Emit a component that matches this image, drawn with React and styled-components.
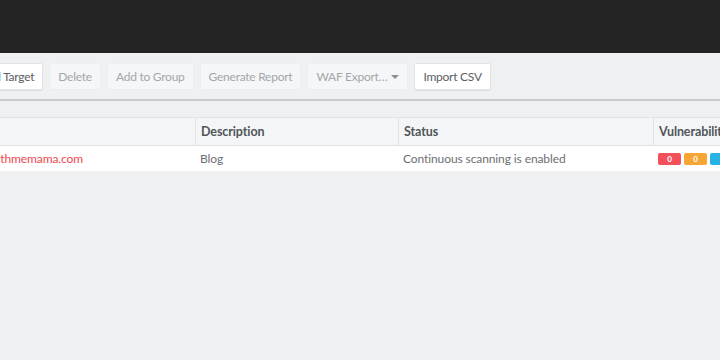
import React from "react";
import styled, { createGlobalStyle } from "styled-components";

const GlobalStyle = createGlobalStyle`
  html, body {
    margin: 0;
    padding: 0;
    background: #eef0f1;
    font-family: "Lato", "Liberation Sans", sans-serif;
    overflow: hidden;
  }
`;

const Page = styled.div`
  width: 720px;
  height: 360px;
  overflow: hidden;
  background: #eef0f1;
`;

const TopBar = styled.div`
  height: 53px;
  background: #242424;
`;

const Toolbar = styled.div`
  display: flex;
  gap: 6px;
  padding: 10px 0 9px 0;
  border-bottom: 2px solid #c9cbcc;
  margin-left: -29px;
  width: 800px;
`;

const Button = styled.button`
  height: 27px;
  padding: 0 8px;
  font-family: inherit;
  font-size: 12px;
  letter-spacing: -0.25px;
  border-radius: 2px;
  border: 1px solid ${(p) => (p.$disabled ? "#eceff0" : "#e2e4e5")};
  background: ${(p) => (p.$disabled ? "#f4f6f7" : "#ffffff")};
  color: ${(p) => (p.$disabled ? "#a3a7aa" : "#5a5e62")};
  box-shadow: ${(p) => (p.$disabled ? "none" : "0 1px 1px rgba(0,0,0,0.08)")};
  display: flex;
  align-items: center;
  gap: 4px;
`;

const Caret = styled.span`
  width: 0;
  height: 0;
  border-left: 4px solid transparent;
  border-right: 4px solid transparent;
  border-top: 4px solid #8b8f92;
`;

const Table = styled.div`
  margin-top: 16px;
  margin-left: -120px;
  width: 960px;
  display: grid;
  grid-template-columns: 315px 203px 255px 190px;
`;

const HeadCell = styled.div`
  height: 27px;
  display: flex;
  align-items: center;
  padding-left: 5px;
  background: #f4f5f6;
  border-top: 1px solid #e1e3e4;
  border-bottom: 1px solid #dfe1e2;
  border-left: 1px solid #e1e3e4;
  font-weight: bold;
  font-size: 12.5px;
  letter-spacing: -0.1px;
  color: #51565a;
  white-space: nowrap;
  overflow: hidden;
`;

const Cell = styled.div`
  height: 25px;
  display: flex;
  align-items: center;
  padding-left: 5px;
  background: #ffffff;
  font-size: 12px;
  letter-spacing: -0.1px;
  color: ${(p) => (p.$link ? "#f0474f" : "#6b6f73")};
  white-space: nowrap;
  gap: 3px;
  ${(p) => p.$link && "justify-content: flex-end; padding-right: 112px;"}
`;

const Badge = styled.span`
  width: 23px;
  height: 12px;
  border-radius: 2px;
  background: ${(p) => p.$color};
  color: #fff;
  font-size: 8px;
  font-weight: bold;
  display: flex;
  align-items: center;
  justify-content: center;
`;

export default function App() {
  return (
    <Page>
      <GlobalStyle />
      <TopBar />
      <Toolbar>
        <Button>Add Target</Button>
        <Button $disabled>Delete</Button>
        <Button $disabled>Add to Group</Button>
        <Button $disabled>Generate Report</Button>
        <Button $disabled>
          WAF Export…
          <Caret />
        </Button>
        <Button>Import CSV</Button>
      </Toolbar>
      <Table>
        <HeadCell>Address</HeadCell>
        <HeadCell>Description</HeadCell>
        <HeadCell>Status</HeadCell>
        <HeadCell>Vulnerabilities</HeadCell>
        <Cell $link>blogwithmemama.com</Cell>
        <Cell>Blog</Cell>
        <Cell>Continuous scanning is enabled</Cell>
        <Cell>
          <Badge $color="#f2505a">0</Badge>
          <Badge $color="#f7a534">0</Badge>
          <Badge $color="#27b2e4">1</Badge>
          <Badge $color="#a4adb3">0</Badge>
        </Cell>
      </Table>
    </Page>
  );
}
